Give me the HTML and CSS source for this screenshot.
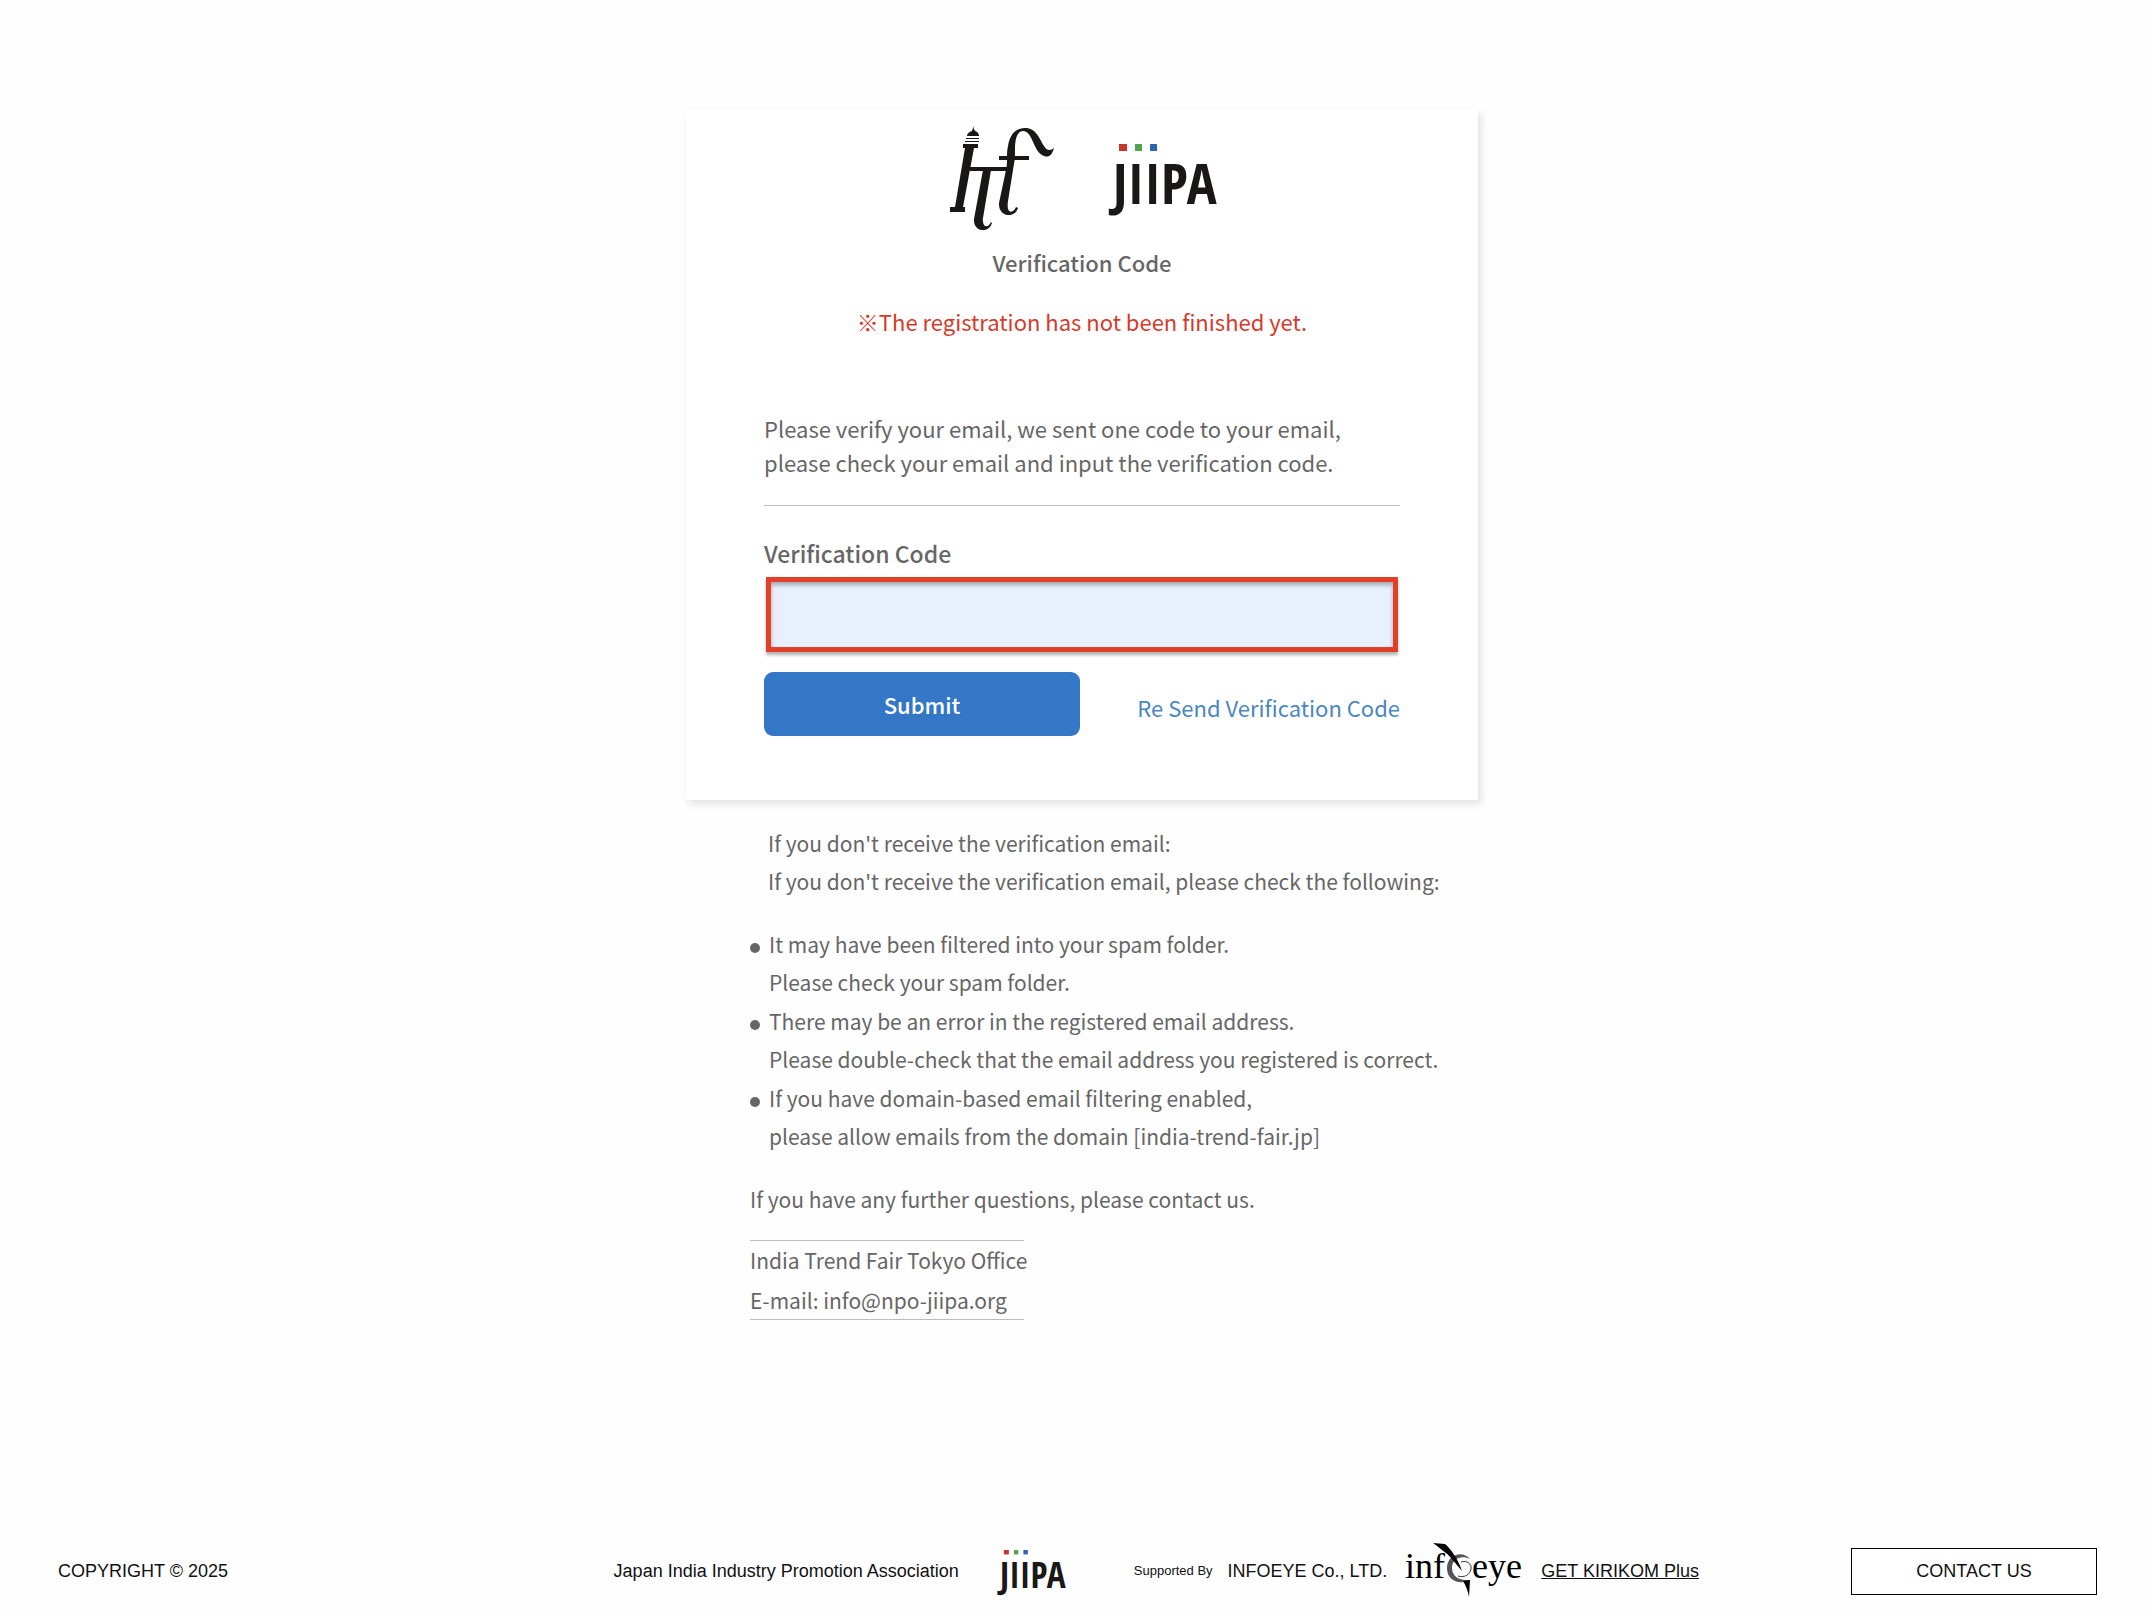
FILE: index.html
```html
<!DOCTYPE html>
<html lang="en">
<head>
  <meta charset="UTF-8" />
  <meta name="viewport" content="width=device-width, initial-scale=1.0" />
  <title>Verification Code</title>
  <link rel="stylesheet" href="styles.css">
</head>
<body>
  <main class="page">
    <div class="card">
      <div class="logos">
        <svg class="logo-itf" viewBox="0 0 104 104" role="img" aria-label="India Trend Fair">
          <g fill="#1a1716">
            <path d="M23 0 C24 4 25 5 27 6 C29 8 29 9 29 10 H17 C17 8 18 7 20 6 C22 5 23 4 23 0 Z" />
            <path d="M16 12 H29 V13 H16 Z M15 15 H29 V16 H15 Z" />
            <path d="M13 18 H28 V22 H24 L13 81 H15 V86 H0 V81 H5 L15 22 H13 Z" />
            <path d="M20 41 H58 V45 H20 Z M49 30 H79 V34 H49 Z" />
            <path d="M33 44 H41 L33 92 C32 101 38 103 41 96 L42 97 C39 108 23 106 24 93 Z" />
            <path d="M56 44 C58 36 56 28 58 20 C60 7 67 2 75 2 C86 2 89 12 94 20 C98 26 101 24 104 22 C102 29 99 32 94 30 C83 26 83 5 73 5 C65 6 65 18 65 26 C65 34 64 38 63 44 L58 75 C56 88 63 88 66 81 L68 82 C65 93 48 91 49 77 Z" />
          </g>
        </svg>
        <svg class="logo-jiipa" viewBox="0 0 104 68" role="img" aria-label="JIIPA">
          <rect x="9" y="0" width="8" height="7" fill="#c8372d" />
          <rect x="25" y="0" width="7" height="7" fill="#4fa452" />
          <rect x="40" y="0" width="7" height="7" fill="#2f64b0" />
          <text x="3" y="60">JIIPA</text>
        </svg>
      </div>

      <h1>Verification Code</h1>
      <p class="notice">※The registration has not been finished yet.</p>

      <form class="verify-form" onsubmit="return false">
        <p class="intro">Please verify your email, we sent one code to your email,<br>please check your email and input the verification code.</p>
        <label for="code">Verification Code</label>
        <input id="code" class="code-input" type="text" />
        <div class="actions">
          <button class="submit-btn" type="submit">Submit</button>
          <a class="resend" href="#">Re Send Verification Code</a>
        </div>
      </form>
    </div>

    <div class="help">
      <p class="help-intro">If you don't receive the verification email:<br>If you don't receive the verification email, please check the following:</p>
      <ul>
        <li>It may have been filtered into your spam folder.<br>Please check your spam folder.</li>
        <li>There may be an error in the registered email address.<br>Please double-check that the email address you registered is correct.</li>
        <li>If you have domain-based email filtering enabled,<br>please allow emails from the domain [india-trend-fair.jp]</li>
      </ul>
      <p>If you have any further questions, please contact us.</p>
      <address>
        <span>India Trend Fair Tokyo Office</span>
        <span>E-mail: info@npo-jiipa.org</span>
      </address>
    </div>
  </main>

  <footer class="footer">
    <p>COPYRIGHT © 2025</p>
    <div class="partners">
      <p>Japan India Industry Promotion Association</p>
      <svg class="footer-jiipa" viewBox="0 0 104 68" role="img" aria-label="JIIPA">
        <rect x="9" y="0" width="8" height="7" fill="#c8372d" />
        <rect x="25" y="0" width="7" height="7" fill="#4fa452" />
        <rect x="40" y="0" width="7" height="7" fill="#2f64b0" />
        <text x="3" y="60">JIIPA</text>
      </svg>
      <small>Supported By</small>
      <p>INFOEYE Co., LTD.</p>
      <svg class="logo-infoeye" viewBox="0 0 118 56" role="img" aria-label="infoeye">
        <text x="0" y="35">inf</text>
        <text x="67" y="35">eye</text>
        <path fill="#555" d="M65 16 C58 7 42 11 42 25 C42 39 56 42 66 37 C57 38 47 35 47 25 C47 15 57 12 65 16 Z" />
        <path fill="none" stroke="#333" d="M56 19 C62 17 67 21 66 26 C65 32 59 35 53 33" />
        <path d="M28 0 L40 1 C46 6 53 16 57 28 C50 20 46 14 41 10 C36 7 33 3 28 0 Z" />
        <path d="M58 38 L65 37 L64 54 C63 48 61 43 58 38 Z" />
      </svg>
      <a href="#">GET KIRIKOM Plus</a>
    </div>
    <button class="contact-btn" type="button">CONTACT US</button>
  </footer>
</body>
</html>
```
FILE: styles.css
```css
* {
  margin: 0;
  padding: 0;
  box-sizing: border-box;
}

body {
  display: flex;
  flex-direction: column;
  min-height: 100vh;
  background: #fefefe;
  color: #666;
  font-family: "Noto Sans CJK JP", "Noto Sans", sans-serif;
}

.page {
  flex: 1;
  padding: 109px 0 40px 12px;
}

.card {
  max-width: 792px;
  margin: 0 auto;
  padding: 17px 78px 64px;
  background: #fff;
  box-shadow: 3px 4px 8px rgba(0, 0, 0, 0.12);
}

.logos {
  display: flex;
  justify-content: center;
  align-items: center;
  gap: 56px;
}

.logo-itf {
  width: 104px;
  height: 104px;
}

.logo-jiipa {
  width: 104px;
  height: 68px;
}

.logo-jiipa,
.footer-jiipa {
  overflow: visible;
  fill: #1a1716;
  font-family: "Open Sans Condensed", "Open Sans", sans-serif;
  font-size: 56px;
  font-weight: bold;
}

h1 {
  margin-top: 14px;
  font-size: 22px;
  font-weight: 500;
  line-height: 36px;
  text-align: center;
}

.notice {
  margin-top: 24px;
  color: #d63a2a;
  font-size: 22px;
  line-height: 34px;
  text-align: center;
}

.intro {
  margin: 73px 0 30px;
  padding-bottom: 26px;
  border-bottom: 1px solid #bdbdbd;
  font-size: 22px;
  line-height: 34px;
}

label {
  display: block;
  font-size: 23px;
  font-weight: 500;
  line-height: 34px;
}

.code-input {
  display: block;
  width: calc(100% - 4px);
  height: 75px;
  margin: 7px 2px 0;
  padding: 0 16px;
  border: 5px solid #e13f26;
  background: #e8effd;
  box-shadow: 0 3px 3px rgba(0, 0, 0, 0.3), inset 0 3px 4px rgba(0, 0, 0, 0.3);
  color: inherit;
  font: inherit;
  font-size: 22px;
}

.code-input:focus {
  outline: none;
}

.actions {
  display: flex;
  justify-content: space-between;
  align-items: center;
  margin-top: 20px;
}

.submit-btn {
  width: 316px;
  height: 64px;
  border: none;
  border-radius: 9px;
  background: #3377c6;
  color: #fff;
  font: inherit;
  font-size: 22px;
  font-weight: 500;
  cursor: pointer;
}

.resend {
  padding-top: 6px;
  color: #4a86c0;
  font-size: 22px;
  line-height: 34px;
  text-decoration: none;
}

.help {
  max-width: 792px;
  margin: 24px auto 0;
  padding-left: 64px;
  font-size: 21px;
  line-height: 38px;
}

.help-intro {
  padding-left: 18px;
}

.help ul {
  margin: 25px 0;
  list-style: none;
}

.help li {
  position: relative;
  padding-left: 19px;
}

.help li + li {
  margin-top: 1px;
}

.help li::before {
  content: "";
  position: absolute;
  top: 18px;
  left: 0;
  width: 10px;
  height: 10px;
  border-radius: 50%;
  background: #666;
}

address {
  width: 274px;
  margin-top: 22px;
  border-top: 1px solid #bdbdbd;
  border-bottom: 1px solid #bdbdbd;
  font-style: normal;
  white-space: nowrap;
}

address span {
  display: block;
}

address span + span {
  margin-top: 2px;
}

.footer {
  display: flex;
  align-items: center;
  padding: 0 55px 15px 58px;
  color: #111;
  font-family: "Liberation Sans", Arial, sans-serif;
  font-size: 18px;
  line-height: 24px;
}

.partners {
  display: flex;
  align-items: center;
  margin: 0 152px 0 auto;
}

.footer a {
  margin-left: 18px;
  color: #111;
}

.footer small {
  margin: 0 15px 0 70px;
  font-size: 13px;
}

.footer-jiipa {
  width: 66px;
  height: 43px;
  margin-left: 39px;
}

.logo-infoeye {
  width: 118px;
  height: 56px;
  margin-left: 18px;
  overflow: visible;
  font-family: "Liberation Serif", serif;
  font-size: 36px;
}

.contact-btn {
  width: 246px;
  height: 47px;
  border: 1px solid #000;
  background: #fff;
  color: #111;
  font: inherit;
  cursor: pointer;
}
```
